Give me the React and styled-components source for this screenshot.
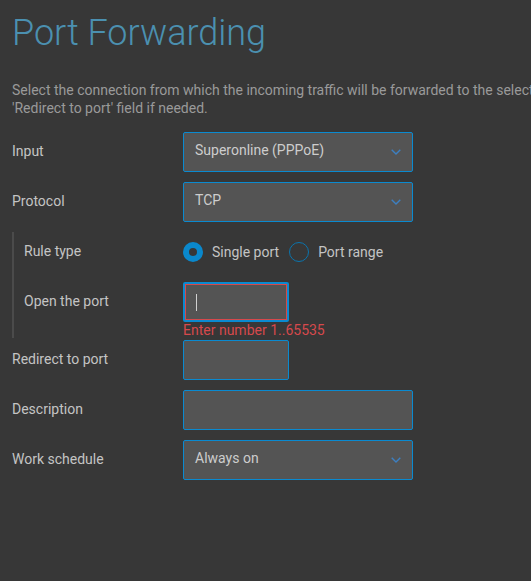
import React from 'react';
import styled, { createGlobalStyle } from 'styled-components';

const bg = '#373737';
const fieldBg = '#545454';
const blue = '#0a8ad0';
const red = '#d6494c';
const labelGrey = '#c4c4c4';

const GlobalStyle = createGlobalStyle`
    html, body {
        margin: 0;
        padding: 0;
        background: ${bg};
        overflow: hidden;
    }
    body {
        font-family: Roboto, "Liberation Sans", sans-serif;
        font-size: 14px;
    }
`;

function Chevron() {
    return (
        <ChevronIcon viewBox="0 0 10 6" width="10" height="6">
            <path d="M0.7 0.7 L5 5 L9.3 0.7" fill="none" stroke="#3d7fc0" strokeWidth="1.4" />
        </ChevronIcon>
    );
}

function Select({ value }) {
    return (
        <SelectBox>
            <FieldText>{value}</FieldText>
            <Chevron />
        </SelectBox>
    );
}

function Radio({ checked, children }) {
    return (
        <RadioItem>
            <RadioDot $checked={checked} />
            <span>{children}</span>
        </RadioItem>
    );
}

function App() {
    return (
        <Page>
            <GlobalStyle />
            <Title>Port Forwarding</Title>
            <Description>
                Select the connection from which the incoming traffic will be forwarded to the selected device. Specify another port in the
                <br />
                'Redirect to port' field if needed.
            </Description>

            <Form>
                <Row>
                    <Label>Input</Label>
                    <Select value="Superonline (PPPoE)" />
                </Row>
                <Row>
                    <Label>Protocol</Label>
                    <Select value="TCP" />
                </Row>

                <Group>
                    <Row>
                        <Label $inset>Rule type</Label>
                        <RadioGroup>
                            <Radio checked>Single port</Radio>
                            <Radio>Port range</Radio>
                        </RadioGroup>
                    </Row>
                    <Row $tight>
                        <Label $inset>Open the port</Label>
                        <InputBox $small $invalid>
                            <Caret />
                        </InputBox>
                    </Row>
                    <ErrorText>Enter number 1..65535</ErrorText>
                </Group>

                <Row>
                    <Label>Redirect to port</Label>
                    <InputBox $small />
                </Row>
                <Row>
                    <Label>Description</Label>
                    <InputBox />
                </Row>
                <Row>
                    <Label>Work schedule</Label>
                    <Select value="Always on" />
                </Row>
            </Form>
        </Page>
    );
}

export default App;

const Page = styled.div`
    padding: 11px 0 0 12px;
    width: 900px;
`;

const Title = styled.h1`
    margin: 0;
    font-size: 36px;
    line-height: 44px;
    font-weight: 300;
    color: #4b90b0;
`;

const Description = styled.p`
    margin: 26px 0 0;
    line-height: 18px;
    color: #9a9a9a;
    white-space: nowrap;
`;

const Form = styled.div`
    margin-top: 15px;
    display: flex;
    flex-direction: column;
`;

const Row = styled.div`
    display: flex;
    align-items: center;
    height: 40px;
    margin-bottom: ${p => (p.$tight ? '0' : '10px')};
`;

const Label = styled.div`
    flex: 0 0 ${p => (p.$inset ? '159px' : '171px')};
    padding-bottom: 2px;
    color: ${labelGrey};
`;

const Group = styled.div`
    border-left: 2px solid #4b4b4b;
    padding-left: 10px;
    margin-bottom: 2px;
`;

const SelectBox = styled.div`
    box-sizing: border-box;
    width: 230px;
    height: 40px;
    display: flex;
    align-items: center;
    justify-content: space-between;
    padding: 0 11px 0 11px;
    background: ${fieldBg};
    border: 1px solid ${blue};
    border-radius: 2px;
`;

const FieldText = styled.span`
    color: #cdcdcd;
    padding-bottom: 4px;
`;

const ChevronIcon = styled.svg`
    display: block;
    flex: none;
`;

const InputBox = styled.div`
    box-sizing: border-box;
    width: ${p => (p.$small ? '106px' : '230px')};
    height: 40px;
    display: flex;
    align-items: center;
    padding-left: 11px;
    background: ${fieldBg};
    border: ${p => (p.$invalid ? '2px' : '1px')} solid ${blue};
    border-radius: 2px;
    box-shadow: ${p => (p.$invalid ? `inset 0 0 0 1px ${red}` : 'none')};
`;

const Caret = styled.span`
    width: 1px;
    height: 17px;
    background: #d0d0d0;
`;

const ErrorText = styled.div`
    padding-left: 159px;
    line-height: 16px;
    color: ${red};
`;

const RadioGroup = styled.div`
    display: flex;
    align-items: center;
    gap: 10px;
    padding-bottom: 1px;
`;

const RadioItem = styled.label`
    display: flex;
    align-items: center;
    gap: 9px;
    color: ${labelGrey};
`;

const RadioDot = styled.span`
    box-sizing: border-box;
    width: 20px;
    height: 20px;
    border-radius: 50%;
    background: ${bg};
    border: ${p => (p.$checked ? '6px' : '1.5px')} solid ${p => (p.$checked ? '#0a88cc' : '#0b74ad')};
`;
